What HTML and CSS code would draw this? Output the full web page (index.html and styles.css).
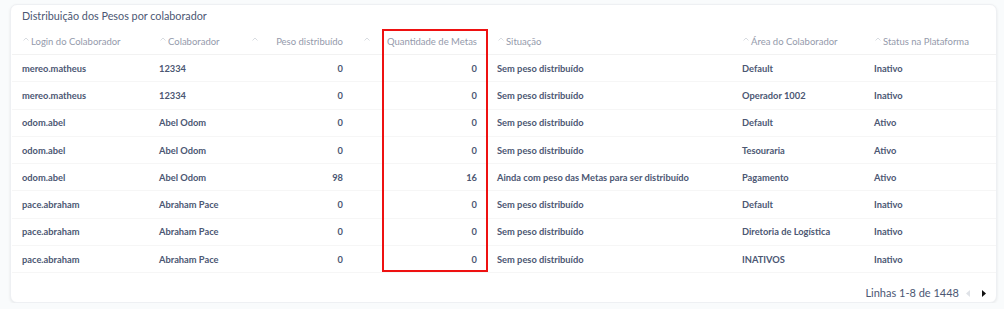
FILE: index.html
```html
<!DOCTYPE html>
<html lang="pt">
<head>
<meta charset="utf-8">
<link rel="stylesheet" href="styles.css">
</head>
<body>
<div class="card">
  <div class="title">Distribuição dos Pesos por colaborador</div>
  <div class="grid">
    <div class="row head">
      <div class="cell"><svg class="caret" viewBox="0 0 6 4"><path d="M0.5 3.5 L3 1 L5.5 3.5"/></svg><span>Login do Colaborador</span></div>
      <div class="cell"><svg class="caret" viewBox="0 0 6 4"><path d="M0.5 3.5 L3 1 L5.5 3.5"/></svg><span>Colaborador</span></div>
      <div class="cell num"><svg class="caret" viewBox="0 0 6 4"><path d="M0.5 3.5 L3 1 L5.5 3.5"/></svg><span>Peso distribuído</span></div>
      <div class="cell num"><svg class="caret" viewBox="0 0 6 4"><path d="M0.5 3.5 L3 1 L5.5 3.5"/></svg><span>Quantidade de Metas</span></div>
      <div class="cell"><svg class="caret" viewBox="0 0 6 4"><path d="M0.5 3.5 L3 1 L5.5 3.5"/></svg><span>Situação</span></div>
      <div class="cell"><svg class="caret" viewBox="0 0 6 4"><path d="M0.5 3.5 L3 1 L5.5 3.5"/></svg><span>Área do Colaborador</span></div>
      <div class="cell"><svg class="caret" viewBox="0 0 6 4"><path d="M0.5 3.5 L3 1 L5.5 3.5"/></svg><span>Status na Plataforma</span></div>
    </div>
    <div class="row"><div class="cell">mereo.matheus</div><div class="cell">12334</div><div class="cell num">0</div><div class="cell num">0</div><div class="cell">Sem peso distribuído</div><div class="cell">Default</div><div class="cell">Inativo</div></div>
    <div class="row"><div class="cell">mereo.matheus</div><div class="cell">12334</div><div class="cell num">0</div><div class="cell num">0</div><div class="cell">Sem peso distribuído</div><div class="cell">Operador 1002</div><div class="cell">Inativo</div></div>
    <div class="row"><div class="cell">odom.abel</div><div class="cell">Abel Odom</div><div class="cell num">0</div><div class="cell num">0</div><div class="cell">Sem peso distribuído</div><div class="cell">Default</div><div class="cell">Ativo</div></div>
    <div class="row"><div class="cell">odom.abel</div><div class="cell">Abel Odom</div><div class="cell num">0</div><div class="cell num">0</div><div class="cell">Sem peso distribuído</div><div class="cell">Tesouraria</div><div class="cell">Ativo</div></div>
    <div class="row"><div class="cell">odom.abel</div><div class="cell">Abel Odom</div><div class="cell num">98</div><div class="cell num">16</div><div class="cell">Ainda com peso das Metas para ser distribuído</div><div class="cell">Pagamento</div><div class="cell">Ativo</div></div>
    <div class="row"><div class="cell">pace.abraham</div><div class="cell">Abraham Pace</div><div class="cell num">0</div><div class="cell num">0</div><div class="cell">Sem peso distribuído</div><div class="cell">Default</div><div class="cell">Inativo</div></div>
    <div class="row"><div class="cell">pace.abraham</div><div class="cell">Abraham Pace</div><div class="cell num">0</div><div class="cell num">0</div><div class="cell">Sem peso distribuído</div><div class="cell">Diretoria de Logística</div><div class="cell">Inativo</div></div>
    <div class="row"><div class="cell">pace.abraham</div><div class="cell">Abraham Pace</div><div class="cell num">0</div><div class="cell num">0</div><div class="cell">Sem peso distribuído</div><div class="cell">INATIVOS</div><div class="cell">Inativo</div></div>
  </div>
  <div class="footer">
    <span class="count">Linhas 1-8 de 1448</span>
    <svg class="arrow prev" viewBox="0 0 4 7"><path d="M4 0 L0 3.5 L4 7 Z"/></svg>
    <svg class="arrow next" viewBox="0 0 4 7"><path d="M0 0 L4 3.5 L0 7 Z"/></svg>
  </div>
  <div class="highlight"></div>
</div>
</body>
</html>
```

FILE: styles.css
```css
html, body {
  margin: 0;
  padding: 0;
  background: #f9fbfc;
  font-family: Lato, "Noto Sans", sans-serif;
}

.card {
  position: relative;
  box-sizing: border-box;
  margin: 4px 0 0 10px;
  width: 987px;
  height: 299px;
  background: #ffffff;
  border: 1px solid #eef0f3;
  border-radius: 7px;
  box-shadow: 0 1px 3px rgba(0, 0, 0, 0.08);
  overflow: hidden;
}

.title {
  padding: 3px 0 0 11px;
  height: 20px;
  line-height: 16px;
  font-size: 10.8px;
  color: #4c5773;
}

.grid {
  margin-left: 1px;
  width: 984px;
}

.row {
  display: grid;
  grid-template-columns: 137px 92px 112px 134px 245px 132px 132px;
  height: 27.3px;
  box-sizing: border-box;
  border-bottom: 1px solid #f6f6f6;
  font-size: 9.3px;
  font-weight: 700;
  color: #4c5773;
}

.row.head {
  height: 27px;
  border-bottom-color: #f2f2f2;
  font-size: 9.5px;
  font-weight: 400;
  color: #949aab;
}

.cell {
  display: flex;
  align-items: center;
  padding: 0 10px;
  white-space: nowrap;
  overflow: hidden;
}

.cell.num {
  justify-content: flex-end;
}

.head .cell.num {
  justify-content: space-between;
}

.caret {
  width: 6px;
  height: 4px;
  margin: 0 2px 5px 1px;
  flex: none;
}

.caret path {
  fill: none;
  stroke: #d4d8de;
  stroke-width: 0.9;
}

.footer {
  display: flex;
  align-items: center;
  justify-content: flex-end;
  padding: 12px 10px 0 0;
  height: 16px;
}

.count {
  font-size: 11px;
  font-weight: 400;
  color: #4c5773;
  line-height: 16px;
  margin-right: 7px;
}

.arrow {
  width: 4px;
  height: 7px;
}

.arrow.prev {
  fill: #dfe2e7;
  margin-right: 12px;
}

.arrow.next {
  fill: #111111;
}

.highlight {
  position: absolute;
  left: 371px;
  top: 24px;
  width: 102px;
  height: 239px;
  border: 2px solid #ee1111;
}
```
